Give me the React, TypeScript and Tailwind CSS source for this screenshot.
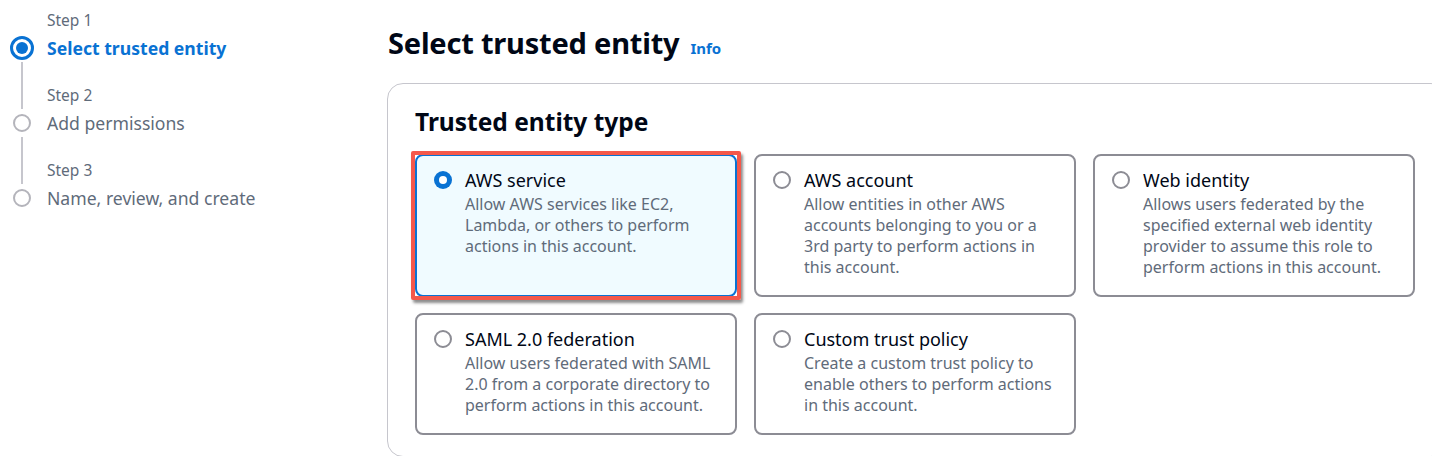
import React from "react";

const font = { fontFamily: '"Noto Sans", "Open Sans", Arial, sans-serif' };

type Opt = { title: string; desc: string; selected?: boolean };

const options: Opt[] = [
  {
    title: "AWS service",
    desc: "Allow AWS services like EC2, Lambda, or others to perform actions in this account.",
    selected: true,
  },
  {
    title: "AWS account",
    desc: "Allow entities in other AWS accounts belonging to you or a 3rd party to perform actions in this account.",
  },
  {
    title: "Web identity",
    desc: "Allows users federated by the specified external web identity provider to assume this role to perform actions in this account.",
  },
  {
    title: "SAML 2.0 federation",
    desc: "Allow users federated with SAML 2.0 from a corporate directory to perform actions in this account.",
  },
  {
    title: "Custom trust policy",
    desc: "Create a custom trust policy to enable others to perform actions in this account.",
  },
];

function Radio({ selected }: { selected?: boolean }) {
  if (selected) {
    return (
      <div className="mt-[3px] flex h-[18px] w-[18px] shrink-0 items-center justify-center rounded-full bg-[#0972d3]">
        <div className="h-[8px] w-[8px] rounded-full bg-white" />
      </div>
    );
  }
  return <div className="mt-[3px] h-[18px] w-[18px] shrink-0 rounded-full border-2 border-[#8c8c94] bg-white" />;
}

function Card({ o }: { o: Opt }) {
  return (
    <div
      className={
        "relative rounded-[8px] border-2 pl-[17px] pr-[12px] pt-[12px] pb-[17px] " +
        (o.selected ? "border-[#0972d3] bg-[#f0fbff]" : "border-[#8c8c94] bg-white")
      }
    >
      {o.selected && (
        <div className="pointer-events-none absolute -left-[6px] -right-[6px] -top-[5px] -bottom-[5px] rounded-[2px] border-4 border-[#f4584b] shadow-[2px_3px_3px_rgba(0,0,0,0.45)]" />
      )}
      <div className="flex gap-[13px]">
        <Radio selected={o.selected} />
        <div>
          <div className="text-[18px] leading-[24px] text-[#000716]">{o.title}</div>
          <div className="mt-[2px] text-[16px] leading-[21px] text-[#5f6b7a]">{o.desc}</div>
        </div>
      </div>
    </div>
  );
}

function Step({
  n,
  title,
  active,
  last,
}: {
  n: number;
  title: string;
  active?: boolean;
  last?: boolean;
}) {
  return (
    <div className="flex flex-col">
      <div className="flex h-[27px]">
        <div className="flex w-[44px] justify-center">
          {n > 1 && <div className="h-full w-[2px] bg-[#c6c6cd]" />}
        </div>
        <div className="ml-[3px] pt-[2px] text-[15.5px] leading-[22px] text-[#5f6b7a]">Step {n}</div>
      </div>
      <div className="flex h-[28px] items-center">
        <div className="flex w-[44px] justify-center">
          {active ? (
            <div className="flex h-[24px] w-[24px] items-center justify-center rounded-full border-[3px] border-[#0972d3] bg-white">
              <div className="h-[12px] w-[12px] rounded-full bg-[#0972d3]" />
            </div>
          ) : (
            <div className="h-[18px] w-[18px] rounded-full border-2 border-[#b4b4bb] bg-white" />
          )}
        </div>
        <div
          className={
            "ml-[3px] text-[17.6px] leading-[28px] " +
            (active ? "font-bold text-[#0972d3]" : "text-[#5f6b7a]")
          }
        >
          {title}
        </div>
      </div>
      {!last && (
        <div className="flex h-[20px]">
          <div className="flex w-[44px] justify-center">
            <div className="h-full w-[2px] bg-[#c6c6cd]" />
          </div>
        </div>
      )}
    </div>
  );
}

export default function App() {
  return (
    <div className="flex h-[456px] w-[1432px] overflow-hidden bg-white" style={font}>
      <div className="w-[387px] shrink-0 pt-[7px]">
        <Step n={1} title="Select trusted entity" active />
        <Step n={2} title="Add permissions" />
        <Step n={3} title="Name, review, and create" last />
      </div>
      <div className="flex-1 pt-[24px]">
        <div className="flex items-baseline gap-[11px]">
          <h1 className="ml-[1px] text-[29px] font-bold leading-[38px] tracking-[-0.2px] text-[#000716]">
            Select trusted entity
          </h1>
          <span className="text-[15px] font-bold text-[#0972d3]">Info</span>
        </div>
        <div className="mt-[21px] h-[374px] w-[1060px] shrink-0 rounded-[16px] border border-[#c6c6cd] pl-[27px] pt-[20px]">
          <h2 className="text-[24.5px] font-bold leading-[36px] text-[#000716]">Trusted entity type</h2>
          <div className="mt-[14px] grid w-[1000px] grid-cols-[322px_322px_322px] gap-x-[17px] gap-y-[16px]">
            {options.map((o) => (
              <Card key={o.title} o={o} />
            ))}
          </div>
        </div>
      </div>
    </div>
  );
}
